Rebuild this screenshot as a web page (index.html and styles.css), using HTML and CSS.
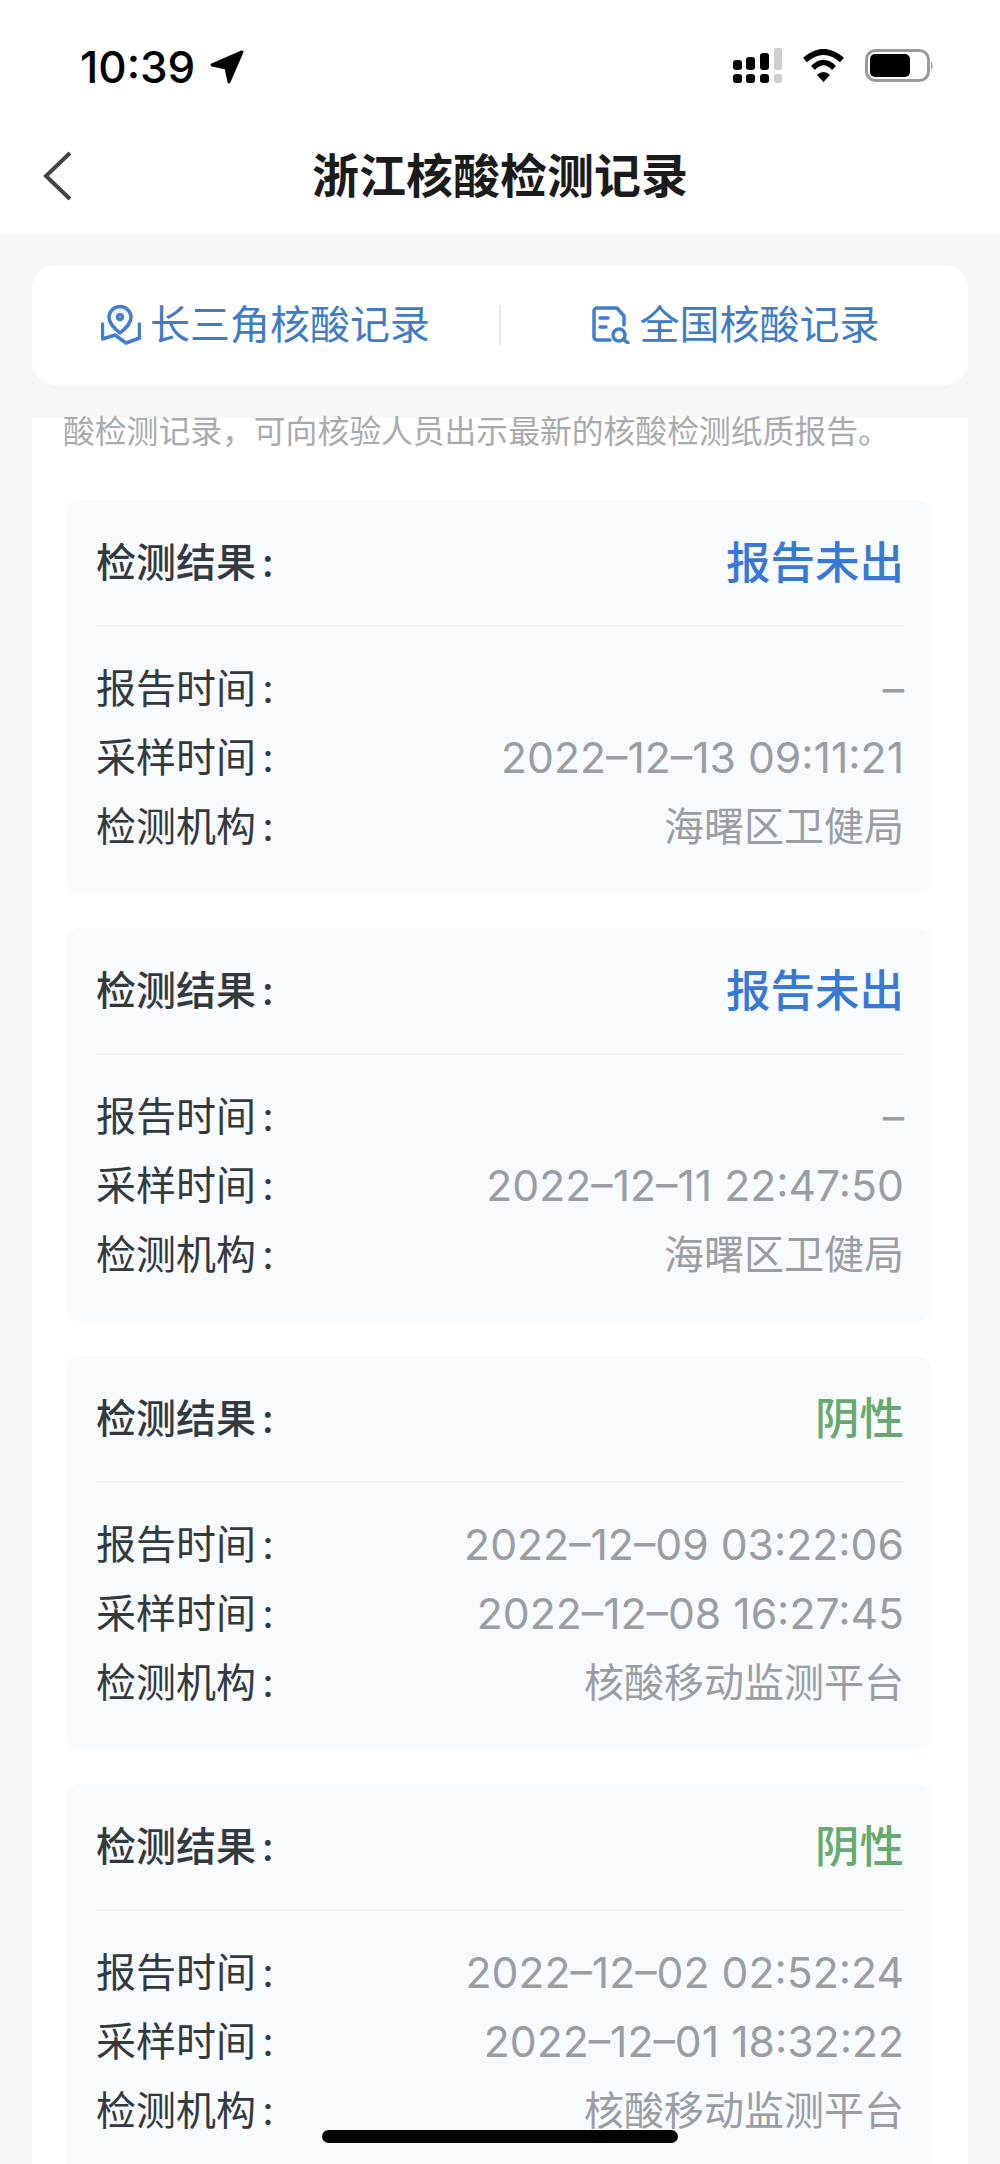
FILE: index.html
```html
<!DOCTYPE html>
<html lang="zh-CN">
<head>
    <meta charset="UTF-8">
    <meta name="viewport" content="width=device-width, initial-scale=1.0">
    <title>浙江核酸检测记录</title>
    <link rel="stylesheet" href="styles.css">
</head>
<body>
    <div class="phone">
        <div class="top-bar">
            <div class="status-bar">
                <div class="status-left">
                    <span class="clock">10:39</span>
                    <svg class="arrow-icon" width="38" height="38" viewBox="0 0 38 38">
                        <path d="M34 4 L4 17 L18 20 L21 34 Z" fill="#000" stroke="#000" stroke-width="3" stroke-linejoin="round"/>
                    </svg>
                </div>
                <div class="status-right">
                    <svg width="50" height="36" viewBox="0 0 50 36">
                        <rect x="0" y="12" width="9" height="10" rx="3"/>
                        <rect x="13" y="9" width="9" height="13" rx="3"/>
                        <rect x="27" y="5" width="9" height="17" rx="3"/>
                        <rect x="41" y="0" width="8" height="22" rx="2" fill="#cfcfcf"/>
                        <rect x="0" y="26" width="9" height="9" rx="3"/>
                        <rect x="13" y="26" width="9" height="9" rx="3"/>
                        <rect x="27" y="26" width="9" height="9" rx="3"/>
                        <rect x="41" y="26" width="8" height="9" rx="2" fill="#cfcfcf"/>
                    </svg>
                    <svg width="44" height="34" viewBox="0 0 44 34">
                        <path d="M3 11 Q21.5 -5 40 11" fill="none" stroke="#000" stroke-width="6"/>
                        <path d="M11 19 Q21.5 8 32 19" fill="none" stroke="#000" stroke-width="5.5"/>
                        <path d="M15 26 Q21.5 20 28 26 L21.5 33 Z"/>
                    </svg>
                    <svg width="70" height="34" viewBox="0 0 70 34">
                        <rect x="1.5" y="1.5" width="62" height="30" rx="9" fill="none" stroke="#9a9a9a" stroke-width="3"/>
                        <rect x="5" y="5" width="40" height="23" rx="5"/>
                        <path d="M66 12 Q69 16.5 66 21 Z" fill="#8c8c8c"/>
                    </svg>
                </div>
            </div>
            <div class="nav-bar">
                <svg class="back-icon" width="32" height="50" viewBox="0 0 32 50">
                    <path d="M28 2 L4 25 L28 48" fill="none" stroke="#444" stroke-width="4"/>
                </svg>
                <h1>浙江核酸检测记录</h1>
            </div>
        </div>

        <div class="tabs">
            <a class="tab">
                <svg width="40" height="42" viewBox="0 0 40 42" fill="none" stroke="#3f7fd0" stroke-width="3.5" stroke-linejoin="round" stroke-linecap="round">
                    <path d="M19 29 C13 24 8 19.5 8 13.5 A11 11 0 0 1 30 13.5 C30 19.5 25 24 19 29 Z"/>
                    <circle cx="19" cy="13" r="2.5"/>
                    <path d="M1.5 20 V35 L14 31 L25 39 L38.5 34 V20"/>
                </svg>
                长三角核酸记录
            </a>
            <span class="tab-line"></span>
            <a class="tab tab-right">
                <svg width="38" height="38" viewBox="0 0 38 38" fill="none" stroke="#3f7fd0" stroke-width="3.5" stroke-linejoin="round" stroke-linecap="round">
                    <path d="M18 34 H5 a3 3 0 0 1 -3 -3 V5 a3 3 0 0 1 3 -3 H25 L32 10 V19"/>
                    <path d="M8 12 H16 M8 21 H14"/>
                    <circle cx="27" cy="29" r="6"/>
                    <path d="M31.5 33.5 L36 37"/>
                </svg>
                全国核酸记录
            </a>
        </div>

        <div class="main">
            <p class="note">酸检测记录，可向核验人员出示最新的核酸检测纸质报告。</p>
            <div class="records">
                <div class="record">
                    <div class="record-head">
                        <span class="label">检测结果 :</span>
                        <span class="result pending">报告未出</span>
                    </div>
                    <div class="record-body">
                        <div class="row"><span class="label">报告时间 :</span><span class="value date">–</span></div>
                        <div class="row"><span class="label">采样时间 :</span><span class="value date">2022–12–13 09:11:21</span></div>
                        <div class="row"><span class="label">检测机构 :</span><span class="value">海曙区卫健局</span></div>
                    </div>
                </div>
                <div class="record">
                    <div class="record-head">
                        <span class="label">检测结果 :</span>
                        <span class="result pending">报告未出</span>
                    </div>
                    <div class="record-body">
                        <div class="row"><span class="label">报告时间 :</span><span class="value date">–</span></div>
                        <div class="row"><span class="label">采样时间 :</span><span class="value date">2022–12–11 22:47:50</span></div>
                        <div class="row"><span class="label">检测机构 :</span><span class="value">海曙区卫健局</span></div>
                    </div>
                </div>
                <div class="record">
                    <div class="record-head">
                        <span class="label">检测结果 :</span>
                        <span class="result negative">阴性</span>
                    </div>
                    <div class="record-body">
                        <div class="row"><span class="label">报告时间 :</span><span class="value date">2022–12–09 03:22:06</span></div>
                        <div class="row"><span class="label">采样时间 :</span><span class="value date">2022–12–08 16:27:45</span></div>
                        <div class="row"><span class="label">检测机构 :</span><span class="value">核酸移动监测平台</span></div>
                    </div>
                </div>
                <div class="record">
                    <div class="record-head">
                        <span class="label">检测结果 :</span>
                        <span class="result negative">阴性</span>
                    </div>
                    <div class="record-body">
                        <div class="row"><span class="label">报告时间 :</span><span class="value date">2022–12–02 02:52:24</span></div>
                        <div class="row"><span class="label">采样时间 :</span><span class="value date">2022–12–01 18:32:22</span></div>
                        <div class="row"><span class="label">检测机构 :</span><span class="value">核酸移动监测平台</span></div>
                    </div>
                </div>
            </div>
        </div>

        <div class="home-bar"></div>
    </div>
</body>
</html>
```

FILE: styles.css
```css
* {
    box-sizing: border-box;
}
html, body {
    margin: 0;
    padding: 0;
}
body {
    font-family: Inter, "Noto Sans CJK SC", sans-serif;
    background-color: #f6f6f6;
}
.phone {
    position: relative;
    width: 1000px;
    height: 2164px;
    overflow: hidden;
    background-color: #f6f6f6;
}
.top-bar {
    height: 234px;
    background-color: #fff;
}
.status-bar {
    height: 118px;
    padding: 48px 65px 0 80px;
    display: flex;
    justify-content: space-between;
    align-items: flex-start;
}
.status-left {
    display: flex;
    align-items: center;
    height: 38px;
    gap: 13px;
}
.clock {
    font-size: 44px;
    line-height: 38px;
    font-weight: 500;
    color: #000;
}
.status-right {
    display: flex;
    align-items: center;
    gap: 19px;
    height: 36px;
}
.nav-bar {
    height: 116px;
    display: grid;
    grid-template-columns: 1fr auto 1fr;
    align-items: center;
    padding: 0 42px;
}
.nav-bar h1 {
    grid-column: 2;
    grid-row: 1;
    margin: 0;
    font-size: 47px;
    line-height: 60px;
    font-weight: 700;
    color: #1b1b1b;
}
.back-icon {
    grid-column: 1;
    grid-row: 1;
}
.tabs {
    height: 120px;
    margin: 31px 32px 0;
    background-color: #fff;
    border-radius: 24px;
    display: grid;
    grid-template-columns: 1fr 2px 1fr;
    align-items: center;
}
.tab {
    display: flex;
    align-items: center;
    justify-content: center;
    gap: 9px;
    font-size: 40px;
    line-height: 50px;
    color: #3f7cc8;
}
.tab-right {
    gap: 10px;
    padding-left: 2px;
}
.tab-line {
    height: 40px;
    background-color: #e6e6e6;
}
.main {
    display: flex;
    flex-direction: column;
    margin: 33px 32px 0;
    padding: 0 36px 0 33px;
    background-color: #fff;
}
.note {
    flex-shrink: 0;
    margin: -3px 0 0 -2px;
    height: 85px;
    font-size: 31.8px;
    line-height: 34px;
    color: #a8abae;
    white-space: nowrap;
}
.records {
    display: flex;
    flex-direction: column;
    gap: 35px;
}
.record {
    height: 393px;
    padding: 0 28px 0 31px;
    background-color: #f7fbfe;
    border-radius: 14px;
}
.record-head {
    height: 127px;
    display: flex;
    justify-content: space-between;
    align-items: center;
    border-bottom: 2px solid #eff3f6;
}
.record-head .label {
    font-weight: 500;
}
.record-body {
    padding-top: 27px;
}
.row {
    height: 69px;
    display: flex;
    justify-content: space-between;
    align-items: center;
}
.label {
    font-size: 40px;
    line-height: 50px;
    word-spacing: -5px;
    color: #34393e;
}
.value {
    font-size: 40px;
    line-height: 50px;
    color: #9a9ea2;
}
.date {
    font-size: 42.7px;
}
.result {
    font-size: 44.5px;
    line-height: 56px;
    font-weight: 500;
}
.pending {
    color: #3a78d6;
}
.negative {
    color: #67a96f;
}
.home-bar {
    position: absolute;
    left: 322px;
    top: 2130px;
    width: 356px;
    height: 13px;
    border-radius: 7px;
    background-color: #000;
}
```
